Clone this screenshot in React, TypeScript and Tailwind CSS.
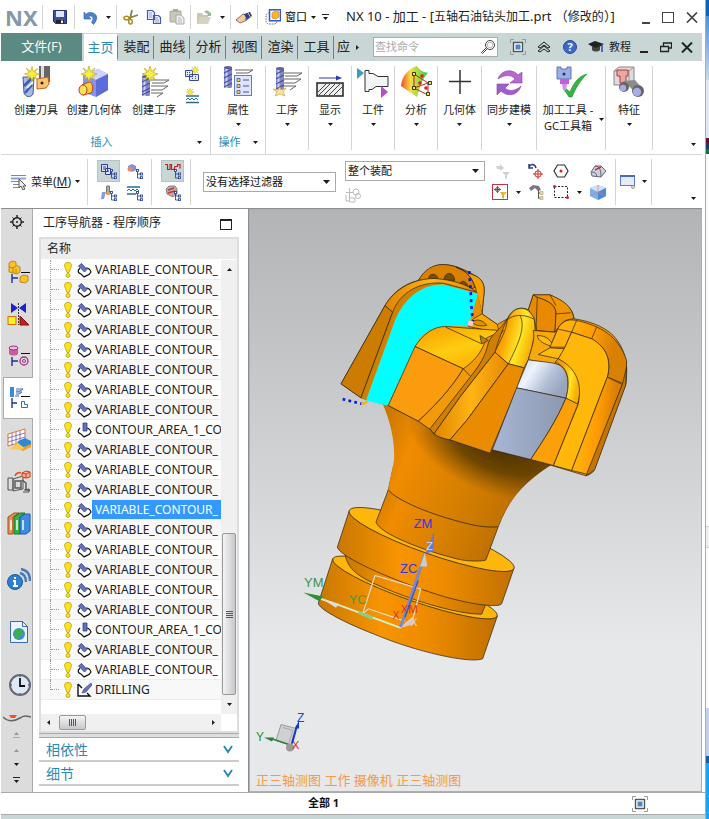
import { useState } from 'react';
import type { ReactNode } from 'react';

const Caret = ({ className = '' }: { className?: string }) => (
  <svg viewBox="0 0 7 4" className={`w-[5px] h-[3px] shrink-0 fill-[#1a1a1a] ${className}`}>
    <path d="M0 0h7L3.5 4z" />
  </svg>
);

const Divider = () => <div className="w-px self-stretch bg-[#d4d4d4]" />;

const Svg = ({ size, children }: { size: string; children: ReactNode }) => {
  const box = size === 'lg' ? '0 0 32 32' : '0 0 16 16';
  const cls = size === 'lg' ? 'w-8 h-8' : 'w-4 h-4';
  return (
    <svg viewBox={box} className={`${cls} shrink-0`} fill="none">
      {children}
    </svg>
  );
};

/* Shared icon parts */
const Star = ({ x, y, s = 1 }: { x: number; y: number; s?: number }) => (
  <path
    transform={`translate(${x} ${y}) scale(${s})`}
    d="M0-8 1.6-2.6 6-6 3-1.5 8 0 3 1.8 5.5 6 1.4 3.2 0 8-1.6 3.2-5.5 6-3 1.6-8 0-3-1.6-6-6-1.6-2.6Z"
    fill="#f7ef3a"
    stroke="#b09a20"
    strokeWidth=".6"
  />
);

const Drill = ({ x, y, h = 22 }: { x: number; y: number; h?: number }) => (
  <g transform={`translate(${x} ${y})`}>
    <rect x="0" y="1" width="8" height={h} rx="1.5" fill="#8088c4" />
    <rect x="1.5" y="1" width="2" height={h} fill="#d0d4f4" />
    <path d={`M0 7l8-4M0 12l8-4M0 17l8-4M0 ${h}l8-4`} stroke="#4650a0" strokeWidth="1.3" />
    <ellipse cx="4" cy="1.5" rx="4" ry="1.5" fill="#5a629c" />
  </g>
);

const Hatch = ({ x, y }: { x: number; y: number }) => (
  <path
    transform={`translate(${x} ${y})`}
    d="M0 1h18l-5 3H1M0 7h17l-6 4H0M0 14h12l-6 4"
    stroke="#666"
    strokeWidth="1"
    fill="none"
  />
);

const TreeMark = ({ x, y }: { x: number; y: number }) => (
  <g transform={`translate(${x} ${y})`} stroke="#1c2f90" fill="#fff" strokeWidth=".8">
    <path d="M1.5 2v6.500h3M1.5 4.500h3" fill="none" />
    <rect x=".5" y="0" width="2" height="2" />
    <rect x="4.500" y="3.500" width="2" height="2" />
    <rect x="4.500" y="7.200" width="2" height="2" />
  </g>
);

/* Ribbon icons */
const ToolIcon = () => (
  <Svg size="lg">
    <rect x="19" y="0" width="11" height="16" fill="#666" />
    <rect x="21" y="0" width="3" height="16" fill="#ddd" />
    <path d="M3 11h11l-1 17c-2 4-8 3-9-1Z" fill="#a8bcdc" stroke="#4a5a90" />
    <path d="M4 20 12 12M5 27l7-8" stroke="#3c5cb8" strokeWidth="2.500" />
    <path d="M7 22l6-6" stroke="#fff" strokeWidth="1.500" />
    <path d="M17 13l11-2 1 7-3 4-9 1Z" fill="#fbc46a" stroke="#c4601c" />
    <circle cx="22" cy="17" r="1.500" fill="#222" />
    <Star x={12} y={8} s={0.95} />
  </Svg>
);

const GeometryIcon = () => (
  <Svg size="lg">
    <path d="M5 9 20 3l10 5v16L18 31 5 26Z" fill="#8494ee" />
    <path d="M5 9 20 3l10 5-12 6Z" fill="#ccd4fa" />
    <path d="M18 14 30 8v16l-12 7Z" fill="#5c6cd8" />
    <path d="M4 19 11 16c4 0 5 8 2 11l-8 2Z" fill="#fbd23a" stroke="#c83420" />
    <ellipse cx="5" cy="24" rx="4" ry="5" fill="#fde45a" stroke="#c83420" />
    <Star x={11} y={8} />
  </Svg>
);

const OperationIcon = () => (
  <Svg size="lg">
    <Hatch x={13} y={13} />
    <Drill x={4} y={9} h={20} />
    <Star x={12} y={8} />
  </Svg>
);

const PropertyIcon = () => (
  <Svg size="lg">
    <Hatch x={13} y={3} />
    <Drill x={2} y={0} h={21} />
    <rect x="12.500" y="9.500" width="17" height="20" fill="#dfe6fb" stroke="#6a78c8" />
    <path d="M21 14h6M21 20h6M21 26h6" stroke="#4450a0" />
    <path d="M15 12.500h3v3h-3zM15 18.500h3v3h-3zM15 24.500h3v3h-3z" fill="#f4dc30" stroke="#4450a0" strokeWidth=".8" />
  </Svg>
);

const ProcessIcon = () => (
  <Svg size="lg">
    <Hatch x={13} y={6} />
    <Drill x={5} y={1} h={22} />
    <path d="M9 21l1 3 5-2-3 4 2 4-5-2-5 2 2-4-4-3 5 1Z" fill="#fbe49a" stroke="#d0a040" strokeWidth=".7" />
  </Svg>
);

const DisplayIcon = () => (
  <Svg size="lg">
    <path d="M5 12h20" stroke="#2a38c0" />
    <path d="M22 9.500 28 12l-6 2.500Z" fill="#2a38c0" />
    <rect x="3" y="17" width="26" height="13" fill="#eee" stroke="#222" strokeWidth="1.500" />
    <path d="M4 26l8-8M5 29l11-11M10 29l11-11M15 29l11-11M20 29l8-8" stroke="#444" />
  </Svg>
);

const WorkpieceIcon = () => (
  <Svg size="lg">
    <path d="M0 2 7 7 0 13Z" fill="#3a9cc4" />
    <path d="M8 4.500h4v3h4l5 3h10v10H19l-4 3h-3v2H8Z" fill="#f4f4f4" stroke="#333" />
    <path d="M24 20l7 6-7 6Z" fill="#b84cd0" />
  </Svg>
);

const AnalysisIcon = () => (
  <Svg size="lg">
    <defs>
      <linearGradient id="rainbow">
        <stop offset="0" stopColor="#f04a30" />
        <stop offset=".35" stopColor="#f8dc40" />
        <stop offset=".7" stopColor="#8cd84a" />
        <stop offset="1" stopColor="#3cc060" />
      </linearGradient>
    </defs>
    <path d="M1 20C2 10 8 3 17 0c3 5 7 6 11 7-6 6-8 14-11 24C12 27 6 24 1 20Z" fill="url(#rainbow)" />
    <path d="M14 8v14l14 7V17L14 22M14 8l14 9" stroke="#c02020" />
    <path d="M12.500 6.500h3v3h-3zM12.500 20.500h3v3h-3zM26.500 26.500h3v3h-3zM28.500 15.500h3v3h-3z" fill="#ffee30" stroke="#333" />
    <circle cx="20" cy="17" r="1.800" fill="#e02020" />
    <circle cx="26" cy="22" r="1.800" fill="#e02020" />
    <circle cx="22" cy="10" r="1.800" fill="#e02020" />
  </Svg>
);

const PlusIcon = () => (
  <Svg size="lg">
    <path d="M16 4v24M5 15.500h22" stroke="#333" strokeWidth="1.500" />
  </Svg>
);

const SyncIcon = () => (
  <Svg size="lg">
    <path d="M5 13C8 4 19 2 25 9l4-3v11H17l5-4c-4-5-11-4-17 0Z" fill="#b468d0" stroke="#8a40a8" strokeWidth=".6" />
    <path d="M28 20c-3 10-14 11-20 5l-4 4V18h12l-4 4c4 4 11 3 16-2Z" fill="#a05cc8" stroke="#8a40a8" strokeWidth=".6" />
  </Svg>
);

const GcToolsIcon = () => (
  <Svg size="lg">
    <path d="M2 1h4v2h6V1h4v12H2Z" fill="#9aaee8" stroke="#6474b4" />
    <circle cx="9" cy="8" r="1.500" fill="#333" />
    <path d="M9 21l6 5C19 16 24 10 32 8 26 14 21 21 17 31h-3L8 22Z" fill="#34b444" stroke="#1c8a30" strokeWidth=".6" />
    <path d="M5 13h9v5H5Z" fill="#c060d8" />
    <path d="M7 18h5l-1 6H8Z" fill="#d88cf0" />
  </Svg>
);

const FeatureIcon = () => (
  <Svg size="lg">
    <path d="M1 5l5-4h15v13l-5 5H1Z" fill="#dcdcdc" stroke="#888" />
    <path d="M1 5h15v14M16 5l5-4" stroke="#999" />
    <path d="M4 4h11v6h-2v7H7v-7H4Z" fill="#e4aaa6" stroke="#c03030" />
    <path d="M10 15l12-1 6 7-7 4Z" fill="#8c8c8c" />
    <circle cx="11" cy="21" r="5" fill="#666" />
    <circle cx="10" cy="22" r="3.200" fill="#a4aee4" />
    <circle cx="25" cy="25" r="6" fill="#666" />
    <circle cx="24" cy="26" r="4.200" fill="#a4aee4" />
  </Svg>
);

const CreateProgramIcon = () => (
  <Svg size="sm">
    <path d="M1.500 4.500h7v6h-7zM5.500 8.500h9v6h-9z" fill="#e4e8fa" stroke="#3a4a90" />
    <path d="M3 6.500h1M5 6.500h1M3 8.500h1M8 10.500h1M11 10.500h1M8 12.500h1M11 12.500h1" stroke="#3a4a90" />
    <Star x={11} y={4} s={0.5} />
  </Svg>
);

const CreateMethodIcon = () => (
  <Svg size="sm">
    <path d="M2 8h13M2 14.500h13" stroke="#2a6c94" strokeWidth="1.600" />
    <path d="M2 12l2-2 2 2 2-2 2 2 2-2 2 2" stroke="#2a6c94" />
    <Star x={6} y={4} s={0.5} />
  </Svg>
);

/* Small toolbar icons */
const ProgramViewIcon = () => (
  <Svg size="sm">
    <path d="M.5 1.500h6v7h-6zM4.500 5.500h5v6h-5z" fill="#dfe4fa" stroke="#2c3c98" />
    <path d="M2 4h3M2 6h2M6 8h2" stroke="#2c3c98" />
    <TreeMark x={9} y={6.5} />
  </Svg>
);

const GeometryViewIcon = () => (
  <Svg size="sm">
    <path d="M1 3l4-2 4 2v4L5 9 1 7Z" fill="#8090dc" />
    <circle cx="3" cy="6" r="2.500" fill="#e88a70" />
    <TreeMark x={9} y={6.5} />
  </Svg>
);

const ToolViewIcon = () => (
  <Svg size="sm">
    <path d="M5.500 1h3v8h-3Z" fill="#aaa" stroke="#777" />
    <path d="M1 7h4L3 14H0Z" fill="#8c9cd8" />
    <path d="M5 7h4v3H6Z" fill="#e8a050" />
    <TreeMark x={9} y={6.5} />
  </Svg>
);

const MethodViewIcon = () => (
  <Svg size="sm">
    <path d="M0 2h13M0 9h9" stroke="#2a6c94" strokeWidth="1.600" />
    <path d="M0 6l2-2 2 2 2-2 2 2 2-2 2 2" stroke="#2a6c94" />
    <TreeMark x={9} y={6.5} />
  </Svg>
);

const PathViewIcon = () => (
  <Svg size="sm">
    <path d="M0 1.500h2.500v5H5v-5h1.500v5H9l1-3h2.500v-2H15v4" stroke="#c02020" strokeWidth="1.200" />
    <TreeMark x={9} y={6.5} />
  </Svg>
);

const StockViewIcon = () => (
  <Svg size="sm">
    <path d="M1 4l3-3h6l2 3v5l-4 3-6-3Z" fill="#b8a8a8" stroke="#888" />
    <path d="M3 5l6-2M3 8l7-2" stroke="#c83a3a" strokeWidth="1.500" />
    <TreeMark x={9} y={6.5} />
  </Svg>
);

const MenuIcon = () => (
  <Svg size="sm">
    <path d="M0 1.500h15M0 7.500h9M2 10.500h6M2 13.500h6" stroke="#888" />
    <path d="M0 4.500h15" stroke="#8aa4dc" strokeWidth="2" />
    <path d="M8 5v9l2-2 2 4 2-1-2-3h3Z" fill="#eee" stroke="#555" />
  </Svg>
);

const FilterOffIcon = () => (
  <Svg size="sm">
    <path d="M1 3h4V1l4 4-4 3V6H2ZM7 9h8l-3 3v4l-2-1v-3Z" fill="#d0d0d0" />
  </Svg>
);

const SnapFilterIcon = () => (
  <Svg size="sm">
    <rect x=".5" y=".5" width="15" height="15" fill="#fff" stroke="#c43444" />
    <circle cx="5.500" cy="5.500" r="2" stroke="#555" />
    <path d="M5.500 2v7M2 5.500h7" stroke="#c03030" />
    <path d="M8 8h7l-3 3v4l-2-1v-3Z" fill="#f0b030" />
  </Svg>
);

const SnapPointIcon = () => (
  <Svg size="sm">
    <path d="M1 1v4h4M1 4c2-4 6-3 7 1" stroke="#2c3c80" strokeWidth="1.500" />
    <circle cx="10" cy="11" r="3.200" stroke="#c83030" />
    <path d="M10 6v10M5 11h10" stroke="#c83030" />
  </Svg>
);

const BinocularsIcon = () => (
  <Svg size="sm">
    <path d="M1 4l4-3 6 1 2 4-3 1-3-3-4 3Z" fill="#778" />
    <path d="M10.500 6v8.500M10 9h3M10 14h3" stroke="#555" />
    <path d="M12 7.500h3v3h-3zM12 12.500h3v3h-3z" fill="#f4e08a" stroke="#999" strokeWidth=".6" />
  </Svg>
);

const HexIcon = () => (
  <Svg size="sm">
    <path d="M4.500 2h7L15 8l-3.500 6h-7L1 8Z" stroke="#333" strokeWidth="1.200" />
    <circle cx="8" cy="8" r="1.500" fill="#d02020" />
  </Svg>
);

const MarqueeIcon = () => (
  <Svg size="sm">
    <path d="M1.500 2.500h13v11h-13z" stroke="#222" strokeDasharray="2 1.500" />
    <circle cx="1.500" cy="2.500" r="1.500" fill="#d02020" />
    <circle cx="14.500" cy="13.500" r="1.500" fill="#d02020" />
  </Svg>
);

const FaceIcon = () => (
  <Svg size="sm">
    <path d="M1 9 5 3h6l5 5-5 6-9-1Z" fill="#ccd0dc" stroke="#667" />
    <path d="M5 3c5 0 6 5 6 11M2 9c3 0 5 2 5 5" stroke="#667" />
    <path d="M5 7l6-3" stroke="#d03030" strokeWidth="1.500" />
  </Svg>
);

const CubeIcon = () => (
  <Svg size="sm">
    <path d="M0 4 8 1l8 3v8l-8 4-8-4Z" fill="#7ab0ee" />
    <path d="M0 4 8 1l8 3-8 4Z" fill="#d0e0fa" />
    <path d="M8 8l8-4v8l-8 4Z" fill="#4c88d8" />
    <path d="M8 1v7L0 12M8 8l8 4" stroke="#d87878" strokeWidth=".7" />
  </Svg>
);

const ScreenIcon = () => (
  <Svg size="sm">
    <rect x=".5" y="1.500" width="14" height="10" fill="#e4ecfc" stroke="#6078c8" />
    <path d="M0 2h15" stroke="#4a68c4" strokeWidth="2" />
    <circle cx="13" cy="13" r="1.500" fill="#ddd" stroke="#88a" strokeWidth=".7" />
  </Svg>
);

const GhostIcon = () => (
  <Svg size="sm">
    <path d="M4.500 1v14M1 5.500h7M1 8v6h3M5 11h5v4H5" stroke="#bbb" />
    <circle cx="11" cy="5" r="3" stroke="#bbb" />
    <circle cx="13" cy="9" r="2.500" stroke="#bbb" />
  </Svg>
);

const FrameIcon = () => (
  <Svg size="sm">
    <path d="M.5 4V.5H4M12 .5h3.500V4M15.500 12v3.500H12M4 15.500H.5V12" stroke="#999" />
    <rect x="3.500" y="3.500" width="9" height="9" fill="#fff" stroke="#555" strokeWidth="1.400" />
    <rect x="5.500" y="5.500" width="5" height="5" fill="#4a88c8" />
  </Svg>
);

/* Quick access icons */
const SaveIcon = () => (
  <Svg size="sm">
    <path d="M1.500 1.500h13v13h-11l-2-2Z" fill="#3a50a4" stroke="#24306c" />
    <path d="M4 2h8v6H4Z" fill="#dce8fa" />
    <path d="M4 11h8v3H4Z" fill="#222" />
    <path d="M9 11.500h2V14H9Z" fill="#fff" />
  </Svg>
);

const UndoIcon = () => (
  <Svg size="sm">
    <path d="M2 3v7h7L6.500 7.500c4-2 6 2 3 6l2 2c6-7 3-12-4-12-2 0-3 1-3.500 2Z" fill="#4a84cc" stroke="#285ca0" strokeWidth=".6" />
  </Svg>
);

const CutIcon = () => (
  <Svg size="sm">
    <path d="M9 1 7 10M15 6 6 9" stroke="#8c8050" strokeWidth="1.800" />
    <ellipse cx="3.500" cy="9" rx="2.500" ry="1.800" stroke="#b08c20" strokeWidth="1.500" />
    <ellipse cx="7.500" cy="12.800" rx="1.800" ry="2.200" stroke="#b08c20" strokeWidth="1.500" />
  </Svg>
);

const CopyIcon = () => (
  <Svg size="sm">
    <path d="M1.500 1.500h5l2 2v7h-7zM7.500 6.500h5l2 2v6h-7z" fill="#eef2fd" stroke="#4658b4" strokeWidth="1.200" />
    <path d="M3 4h3M3 6h3M3 8h3M9 9h3M9 11h4M9 13h4" stroke="#7888cc" strokeWidth=".8" />
  </Svg>
);

const PasteIcon = () => (
  <Svg size="sm">
    <path d="M1 2h11v11H1Z" fill="#c8c8b8" stroke="#aaa89c" />
    <path d="M4 0h5v3H4Z" fill="#aaa" />
    <path d="M7 6h5l3 3v6H7Z" fill="#eee" stroke="#aaa" />
    <path d="M9 9h3M9 11h4M9 13h4" stroke="#bbb" />
  </Svg>
);

const FolderIcon = () => (
  <Svg size="sm">
    <path d="M1 4h5l1 2h5v9H1Z" fill="#c8c8b0" />
    <path d="M1 15 4 8h11l-3 7Z" fill="#d4d4c0" />
    <path d="M8 3c3-3 5-1 6 1l1-1v4h-4l1-1c-1-2-2-2-4-3Z" fill="#9cb89c" />
  </Svg>
);

const BrushIcon = () => (
  <Svg size="sm">
    <path d="M0 11 7 5l5 2-3 3 2 1-7 3Z" fill="#f8cc98" stroke="#705040" strokeWidth=".8" />
    <path d="M8 5l6-2 2 4-5 4Z" fill="#2c3c98" />
    <path d="M12 4l3 5" stroke="#f0d040" />
  </Svg>
);

const WindowIcon = () => (
  <Svg size="sm">
    <rect x="1" y="4" width="11" height="11" rx="3" stroke="#666" strokeDasharray="1.500 1" />
    <rect x="4.500" y=".8" width="11" height="11" fill="#fff" stroke="#2858e0" strokeWidth="1.500" />
    <path d="M7 4l3-2 4 1v5l-3 2-4-1Z" fill="#f8b830" stroke="#e08010" strokeWidth=".7" />
  </Svg>
);

/* Resource bar icons */
const RailSvg = ({ children }: { children: ReactNode }) => (
  <svg viewBox="0 0 24 24" className="w-6 h-6" fill="none">
    {children}
  </svg>
);

const railIcons: { name: string; gap?: string; icon: ReactNode }[] = [
  {
    name: '装配导航器',
    icon: (
      <RailSvg>
        <path d="M2 3l3-2 4 1v3l4 2v5l-3 2-8-2Z" fill="#fbc02a" stroke="#b07808" strokeWidth=".8" />
        <path d="M2 7l4 1 3-2M6 8v5M9 9v5" stroke="#b07808" strokeWidth=".8" />
        <path d="M5 14v9M5 18h6" stroke="#1c2fa0" strokeWidth="1.400" />
        <path d="M14 12.500h9" stroke="#111" />
        <path d="M13 17l3-2 5 1v5l-3 2-5-1Z" fill="#fbc02a" stroke="#b07808" strokeWidth=".8" />
      </RailSvg>
    ),
  },
  {
    name: '约束导航器',
    icon: (
      <RailSvg>
        <path d="M4 1l7 5-7 5ZM19 1l-7 5 7 5Z" fill="#1c22d0" />
        <path d="M11.500 1v22" stroke="#333" strokeDasharray="2 1" />
        <rect x="1" y="14.500" width="8" height="8" fill="#f8f020" stroke="#d07010" />
        <path d="M13 14l9 9h-9Z" fill="#c82020" stroke="#801010" />
      </RailSvg>
    ),
  },
  {
    name: '部件导航器',
    icon: (
      <RailSvg>
        <path d="M2 4v6c2 2 7 2 9 0V4Z" fill="#cc5aa0" />
        <ellipse cx="6.500" cy="4" rx="4.500" ry="2" fill="#f0b8dc" stroke="#98307a" />
        <path d="M14 9.500h9" stroke="#111" />
        <path d="M5 13v9M5 17h6" stroke="#1c2fa0" strokeWidth="1.400" />
        <circle cx="17" cy="17" r="4" stroke="#a83088" strokeWidth="1.300" />
        <circle cx="17" cy="17" r="1.500" stroke="#a83088" />
      </RailSvg>
    ),
  },
  {
    name: '工序导航器',
    icon: (
      <RailSvg>
        <path d="M3 1h4v10H3Z" fill="#3c8ad8" />
        <path d="M9 3h7l-3 2H9M9 6h6l-3 2H9M8 10h4" stroke="#3c6cb8" />
        <path d="M14 10.500h9" stroke="#111" />
        <path d="M5 12v10M5 17h5" stroke="#1c2fa0" strokeWidth="1.400" />
        <path d="M14.500 15.500v6h6v-3h-3v-3Z" stroke="#2c70c8" />
      </RailSvg>
    ),
  },
  {
    name: '机床导航器',
    icon: (
      <RailSvg>
        <path d="M1 6 18 1v12L1 18Z" fill="#fff" stroke="#d87830" />
        <path d="M5 5v12M9 4v11M13 3v11M1 10l17-5M1 14l17-5" stroke="#7858b0" strokeWidth=".8" />
        <path d="M8 15l9-4 7 3v5l-8 4-8-4Z" fill="#f8a020" />
        <path d="M11 13l7-3 6 3v3l-7 3-6-3Z" fill="#2c88d8" />
        <path d="M2 21l9-6 6 5-4 2Z" fill="#fbc860" />
      </RailSvg>
    ),
  },
  {
    name: '加工特征导航器',
    icon: (
      <RailSvg>
        <path d="M1 8h5v12H1ZM6 9l10-3v13l-10 2Z" fill="#dcdcdc" stroke="#555" />
        <path d="M8 11h6v7H8ZM15 10l4 3v7h4" stroke="#555" strokeWidth="1.400" />
        <path d="M8 6c1-3 4-4 6-3" stroke="#e05020" strokeWidth="1.500" />
        <path d="M15 3l4-2 4 1v5l-4 1-4-1ZM15 3l4 1 4-2M19 4v4" fill="#f8b090" stroke="#d83a10" />
        <path d="M17 20l5-1v3h-6" stroke="#555" />
      </RailSvg>
    ),
  },
  {
    name: '重用库',
    icon: (
      <RailSvg>
        <path d="M1 5 7 1h5L6 5v17H1Z" fill="#e89050" stroke="#a04c20" />
        <path d="M7 5l6-4h5l-5 4v17H7Z" fill="#38b048" stroke="#187428" />
        <path d="M13 5l5-3h5v17l-4 3h-6Z" fill="#3c8ce0" stroke="#1c5ca8" />
        <path d="M4 8v10M10 8v10M16 8v10" stroke="#fff" strokeWidth="1.400" />
      </RailSvg>
    ),
  },
  {
    name: 'HD3D 工具',
    gap: 'mt-[13px]',
    icon: (
      <RailSvg>
        <circle cx="8" cy="15" r="7.500" fill="#2c80d4" stroke="#1858a0" />
        <path d="M6 14h2v5M6 19h5M8 10v2" stroke="#fff" strokeWidth="2" />
        <path d="M13 6c4 1 6 4 6 9M14 2c6 1 9 5 9 12" stroke="#4878b8" strokeWidth="2.500" />
      </RailSvg>
    ),
  },
  {
    name: 'Web 浏览器',
    gap: 'mt-[11px]',
    icon: (
      <RailSvg>
        <path d="M3.500 1.500h12l5 5v16h-17Z" fill="#eef4fe" stroke="#3c68b8" />
        <path d="M15.500 1.500v5h5" stroke="#3c68b8" />
        <circle cx="12" cy="14" r="6" fill="#3c8cd8" />
        <path d="M8 10c3-2 4 0 7 0l1 4-3 2-2 4-4-4Z" fill="#3cb048" />
      </RailSvg>
    ),
  },
  {
    name: '历史记录',
    gap: 'mt-[11px]',
    icon: (
      <RailSvg>
        <circle cx="13" cy="12" r="10" fill="#dce8f6" stroke="#667" strokeWidth="2" />
        <path d="M13 5v8h5" stroke="#111" strokeWidth="1.800" />
        <path d="M13 3v1M13 20v1M4 12h1M21 12h1" stroke="#333" />
      </RailSvg>
    ),
  },
];

const tabs = ['主页', '装配', '曲线', '分析', '视图', '渲染', '工具'];

const toolGroups: { label: string; second?: string; width: string; icon: ReactNode }[] = [
  { label: '工序', width: 'w-[42px]', icon: <ProcessIcon /> },
  { label: '显示', width: 'w-[42px]', icon: <DisplayIcon /> },
  { label: '工件', width: 'w-[42px]', icon: <WorkpieceIcon /> },
  { label: '分析', width: 'w-[42px]', icon: <AnalysisIcon /> },
  { label: '几何体', width: 'w-[43px]', icon: <PlusIcon /> },
  { label: '同步建模', width: 'w-[54px]', icon: <SyncIcon /> },
  { label: '加工工具 -', second: 'GC工具箱', width: 'w-[68px]', icon: <GcToolsIcon /> },
  { label: '特征', width: 'w-[46px]', icon: <FeatureIcon /> },
];

const operations = [
  ...Array(8).fill('VARIABLE_CONTOUR_'),
  'CONTOUR_AREA_1_CO',
  ...Array(9).fill('VARIABLE_CONTOUR_'),
  'CONTOUR_AREA_1_CO',
  'VARIABLE_CONTOUR_',
  'VARIABLE_CONTOUR_',
  'DRILLING',
] as string[];

const BigButton = ({ label, width, icon }: { label: string; width: string; icon: ReactNode }) => (
  <button className={`${width} flex flex-col items-center`}>
    {icon}
    <span className="mt-[2px] text-[11px] leading-5 whitespace-nowrap">{label}</span>
  </button>
);

const TitleBar = () => (
  <header className="flex h-[33px] items-center pt-px pl-1">
    <span className="w-[37px] text-[22px] leading-6 font-bold text-[#8598a8]" style={{ fontFamily: 'Noto Sans' }}>
      NX
    </span>
    <div className="flex h-6 items-center">
      <Divider />
      <button className="ml-[9px]" aria-label="保存"><SaveIcon /></button>
      <div className="mr-[7px] ml-[6px] flex self-stretch"><Divider /></div>
      <button className="flex items-center gap-2" aria-label="撤消"><UndoIcon /><Caret /></button>
      <div className="mr-[6px] ml-[5px] flex self-stretch"><Divider /></div>
      <button aria-label="剪切"><CutIcon /></button>
      <button className="ml-[7px]" aria-label="复制"><CopyIcon /></button>
      <button className="ml-[7px]" aria-label="粘贴"><PasteIcon /></button>
      <div className="mx-[5px] flex self-stretch"><Divider /></div>
      <button className="flex items-center gap-2" aria-label="打开"><FolderIcon /><Caret /></button>
      <div className="mx-[5px] flex self-stretch"><Divider /></div>
      <button aria-label="格式刷"><BrushIcon /></button>
      <div className="mr-[7px] ml-[5px] flex self-stretch"><Divider /></div>
      <button className="flex items-center gap-1 text-[11px]">
        <WindowIcon />
        窗口
        <Caret />
      </button>
      <button className="ml-[6px] flex flex-col items-center gap-[2px]" aria-label="更多">
        <span className="h-px w-[7px] bg-[#222]" />
        <Caret />
      </button>
    </div>
    <h1 className="ml-[17px] flex-1 text-[13px] whitespace-nowrap text-[#222]">
      NX 10 - 加工 - [<span className="text-xs">五轴石油钻头加工</span>.prt （<span className="text-xs">修改的</span>）]
    </h1>
    <div className="mr-[7px] flex items-center gap-3">
      <button className="mt-3 h-[2px] w-2 bg-[#444]" aria-label="最小化" />
      <button className="h-[11px] w-3 border border-[#444]" aria-label="最大化" />
      <button aria-label="关闭">
        <svg viewBox="0 0 12 11" className="h-[11px] w-3"><path d="M1 .5l10 10M11 .5l-10 10" stroke="#444" strokeWidth="1.700" /></svg>
      </button>
    </div>
  </header>
);

const TabBar = ({ tab, onTab }: { tab: string; onTab: (t: string) => void }) => (
  <nav className="mr-[3px] flex h-7 items-stretch bg-[#c8d7d5] text-[13px] text-[#222]">
    <button className="w-[81px] bg-[#5a8a82] text-white">文件(F)</button>
    {tabs.map((t) => (
      <div key={t} className="flex items-center pl-[2px]">
        <button
          onClick={() => onTab(t)}
          className={`h-7 w-[33px] ${t === tab ? 'mt-[2px] bg-white text-[#2b8ab5]' : ''}`}
        >
          {t}
        </button>
        <div className="h-[23px] w-px bg-[#5a8a82]" />
      </div>
    ))}
    <button className="ml-[3px] flex w-[27px] items-center gap-[5px]">
      应<Caret className="-rotate-90" />
    </button>
    <div className="ml-[9px] flex h-5 w-[125px] items-center self-center border border-[#aaa] bg-white">
      <input aria-label="查找命令" placeholder="查找命令" className="w-full min-w-0 pl-px text-[11px] outline-none placeholder:text-[#aaa]" />
      <svg viewBox="0 0 16 16" className="mr-px h-4 w-4 shrink-0" fill="none">
        <circle cx="10" cy="6" r="4.500" stroke="#444" />
        <circle cx="10" cy="6" r="2.800" stroke="#999" strokeWidth=".7" />
        <path d="M6 9l-4.500 4.500 1 1L7 10" stroke="#444" />
      </svg>
    </div>
    <div className="ml-[12px] flex flex-1 items-center">
      <button aria-label="全屏"><FrameIcon /></button>
      <button className="ml-[11px]" aria-label="收起功能区">
        <svg viewBox="0 0 14 12" className="h-3 w-[14px]" fill="none">
          <path d="M1 6l6-5 6 5-2 1-4-3-4 3ZM1 10l6-5 6 5-2 1-4-3-4 3Z" stroke="#222" />
        </svg>
      </button>
      <button className="ml-3" aria-label="帮助">
        <svg viewBox="0 0 14 14" className="h-[14px] w-[14px]">
          <circle cx="7" cy="7" r="6.500" fill="#3c68c8" stroke="#2848a0" />
          <text x="7" y="11" textAnchor="middle" fontSize="11" fontWeight="700" fill="#fff">?</text>
        </svg>
      </button>
      <button className="ml-[11px] flex items-center gap-1 text-[11px]">
        <svg viewBox="0 0 17 14" className="h-[14px] w-[17px]">
          <path d="M0 4 7 1l9 3-8 5Z" fill="#222" />
          <path d="M4 6v4c2 2 6 2 8 0V6L8 8Z" fill="#444" />
          <path d="M14 4v8" stroke="#2c48b0" strokeWidth="1.500" />
        </svg>
        教程
      </button>
      <button className="mt-[10px] ml-[9px] h-[2px] w-2 bg-[#222]" aria-label="最小化窗口" />
      <button className="ml-3" aria-label="还原窗口">
        <svg viewBox="0 0 12 11" className="h-[11px] w-3" fill="none">
          <path d="M3.500 4V1h8v5H8M.5 4.500h8v5h-8z" stroke="#222" strokeWidth="1.300" />
        </svg>
      </button>
      <button className="ml-[9px]" aria-label="关闭窗口">
        <svg viewBox="0 0 12 11" className="h-[11px] w-3"><path d="M1 .5l10 10M11 .5l-10 10" stroke="#222" strokeWidth="2" /></svg>
      </button>
    </div>
  </nav>
);

const Ribbon = () => (
  <section className="mr-[3px] flex h-[94px] items-start border-b border-[#d8d8d8] pt-[5px] text-[#222]">
    <div className="flex h-[84px] w-[209px] flex-col justify-between">
      <div className="flex pl-[7px]">
        <BigButton label="创建刀具" width="w-14" icon={<ToolIcon />} />
        <BigButton label="创建几何体" width="w-[60px]" icon={<GeometryIcon />} />
        <BigButton label="创建工序" width="w-[60px]" icon={<OperationIcon />} />
        <div className="flex flex-col gap-[6px]">
          <button aria-label="创建程序"><CreateProgramIcon /></button>
          <button aria-label="创建方法"><CreateMethodIcon /></button>
        </div>
      </div>
      <div className="grid h-4 grid-cols-[1fr_auto_1fr] items-center pr-2 text-[11px] leading-4 text-[#2b8ab5]">
        <span />
        插入
        <Caret className="justify-self-end" />
      </div>
    </div>
    <Divider />
    <div className="flex h-[84px] w-[54px] flex-col items-center justify-between">
      <div className="flex flex-col items-center">
        <BigButton label="属性" width="w-[54px]" icon={<PropertyIcon />} />
        <Caret className="mt-[3px]" />
      </div>
      <div className="flex h-4 items-center gap-3 text-[11px] leading-4 text-[#2b8ab5]">
        操作
        <Caret />
      </div>
    </div>
    <Divider />
    {toolGroups.map((g) => (
      <div key={g.label} className="flex h-[84px]">
        <div className={`${g.width} flex flex-col items-center`}>
          {g.second ? (
            <button className="flex flex-col items-center text-[11px] whitespace-nowrap">
              {g.icon}
              <span className="mt-1 pr-[6px] leading-4">{g.label}</span>
              <span className="flex items-start gap-[7px] pl-[6px] leading-4">
                {g.second}
                <Caret />
              </span>
            </button>
          ) : (
            <>
              <BigButton label={g.label} width="w-full" icon={g.icon} />
              <Caret className="mt-[3px]" />
            </>
          )}
        </div>
        <Divider />
      </div>
    ))}
    <div className="flex h-[84px] flex-1 items-end justify-end pr-[6px] pb-1"><Caret /></div>
  </section>
);

const Select = ({ label, width, items }: { label: string; width: string; items: string[] }) => (
  <div className={`relative flex ${width}`}>
    <select aria-label={label} className="h-5 w-full appearance-none border border-[#aaa] bg-white pl-[2px] text-[11px] leading-4 text-[#111]">
      {items.map((i) => (
        <option key={i}>{i}</option>
      ))}
    </select>
    <Caret className="pointer-events-none absolute top-2 right-[6px] w-[7px]! h-1!" />
  </div>
);

const Toolbar = () => (
  <section className="mr-[3px] flex h-[54px] items-center border-b border-[#8c8f92] text-[#222]">
    <button className="ml-[10px] flex w-[76px] items-center gap-1 text-xs">
      <MenuIcon />
      <span><span className="text-[11px]">菜单</span>(<u>M</u>)</span>
      <Caret />
    </button>
    <div className="flex h-[46px]"><Divider /></div>
    <div className="ml-[9px] grid grid-cols-[23px_22px] items-center justify-items-center gap-x-1">
      <button className="flex h-[22px] w-[23px] items-center justify-center border border-[#b4c4c2] bg-[#c8d7d5]" aria-label="程序顺序视图"><ProgramViewIcon /></button>
      <button aria-label="几何视图"><GeometryViewIcon /></button>
      <button className="flex h-[22px] items-center" aria-label="机床视图"><ToolViewIcon /></button>
      <button aria-label="加工方法视图"><MethodViewIcon /></button>
    </div>
    <div className="ml-[5px] flex h-[46px]"><Divider /></div>
    <div className="mx-[9px] mr-[6px] flex flex-col items-center">
      <button className="flex h-[22px] w-[23px] items-center justify-center border border-[#b4c4c2] bg-[#c8d7d5]" aria-label="显示刀轨"><PathViewIcon /></button>
      <button className="flex h-[22px] items-center" aria-label="显示毛坯"><StockViewIcon /></button>
    </div>
    <div className="flex h-[46px]"><Divider /></div>
    <div className="ml-3"><Select label="选择过滤器" width="w-[133px]" items={['没有选择过滤器']} /></div>
    <div className="ml-[9px] flex flex-col gap-[6px]">
      <Select label="选择范围" width="w-[140px]" items={['整个装配']} />
      <button className="w-4" aria-label="捕捉"><GhostIcon /></button>
    </div>
    <div className="ml-[7px] grid grid-cols-[28px_16px] gap-y-[5px]">
      <span className="pl-[3px]"><FilterOffIcon /></span>
      <span />
      <button className="flex items-center gap-2" aria-label="点过滤器"><SnapFilterIcon /><Caret /></button>
    </div>
    <div className="-ml-2 flex flex-col gap-[5px]">
      <button aria-label="捕捉点"><SnapPointIcon /></button>
      <button aria-label="查找"><BinocularsIcon /></button>
    </div>
    <div className="ml-[9px] flex flex-col gap-[5px]">
      <button aria-label="多边形"><HexIcon /></button>
      <button className="flex items-center gap-2" aria-label="矩形选择"><MarqueeIcon /><Caret /></button>
    </div>
    <div className="ml-2 flex flex-col gap-[5px]">
      <button aria-label="面"><FaceIcon /></button>
      <button aria-label="着色"><CubeIcon /></button>
    </div>
    <div className="ml-[9px] flex h-[46px]"><Divider /></div>
    <button className="mx-[4px] flex items-center gap-[6px]" aria-label="窗口布局"><ScreenIcon /><Caret /></button>
    <div className="flex h-[46px]"><Divider /></div>
    <div className="flex h-[46px] flex-1 items-end justify-end pr-[6px] pb-[5px]"><Caret /></div>
  </section>
);

const Rail = () => (
  <aside className="flex w-8 shrink-0 flex-col items-center border-r border-[#aaa] bg-[#dcdcdc]">
    <button className="flex h-[42px] items-start pt-[6px]" aria-label="设置">
      <svg viewBox="0 0 14 14" className="h-[14px] w-[14px]" fill="none">
        <circle cx="7" cy="7" r="4.300" stroke="#222" strokeWidth="1.400" />
        <path d="M7 0v3M7 11v3M0 7h3M11 7h3" stroke="#222" strokeWidth="1.500" />
        <path d="M2.500 2.500l2 2M9.500 9.500l2 2M11.500 2.500l-2 2M2.500 11.500l2-2" stroke="#222" />
        <circle cx="7" cy="7" r="1" fill="#222" />
      </svg>
    </button>
    {railIcons.map((r) => (
      <button
        key={r.name}
        aria-label={r.name}
        className={`${r.gap ?? ''} flex h-[42px] shrink-0 items-center justify-center ${
          r.name === '工序导航器' ? '-mr-px w-[30px] self-end border-y border-l border-[#aaa] bg-white' : 'w-full pl-1'
        }`}
      >
        {r.icon}
      </button>
    ))}
    <svg viewBox="0 0 28 8" className="mt-2 h-2 w-7 shrink-0" fill="none">
      <path d="M0 3c6 6 12 4 17 1s6-2 11-1" stroke="#666" strokeWidth="1.500" />
      <path d="M6 1h8l-2 3H8Z" fill="#f05020" />
    </svg>
    <div className="flex flex-1 flex-col items-center justify-around pt-1 pb-1">
      <span className="flex flex-col items-center gap-[2px]"><Caret className="rotate-180 fill-[#999]!" /><span className="h-px w-[7px] bg-[#aaa]" /></span>
      <Caret className="rotate-180 fill-[#999]!" />
      <Caret />
      <span className="flex flex-col items-center gap-[2px]"><span className="h-px w-[7px] bg-[#222]" /><Caret /></span>
    </div>
  </aside>
);

const MillMark = ({ name }: { name: string }) => (
  <svg viewBox="0 0 15 16" className="h-4 w-[15px] shrink-0" fill="none">
    {name === 'DRILLING' ? (
      <>
        <path d="M1 2v12h12l-3-3M1 2l4 4" stroke="#111" strokeWidth="1.400" />
        <path d="M14 1 7 7l-2 4 4-1 6-7Z" fill="#6874bc" stroke="#2c387c" strokeWidth=".6" />
      </>
    ) : (
      <>
        <path d="M3 6c-3 3-2 5 1 6l3 3c2-2 5-1 7-5-1-3-3-4-5-4" fill="#fff" stroke="#111" strokeWidth="1.200" />
        <path
          d={name.startsWith('CONTOUR') ? 'M6 1h4v8H6Z' : 'M1.500 4l3-2.500 5.500 6-2.500 2.500Z'}
          fill="#6470c4"
          stroke="#323c84"
          strokeWidth=".8"
        />
      </>
    )}
  </svg>
);

const Navigator = () => {
  const [selected, setSelected] = useState(12);

  return (
    <section className="flex w-[215px] shrink-0 flex-col bg-white pr-[9px] pl-[6px] text-[#222]">
      <div className="flex h-7 items-center justify-between pr-[7px] pl-1">
        <h2 className="text-xs">工序导航器 - 程序顺序</h2>
        <button className="mt-[3px] h-[11px] w-3 border border-t-2 border-[#222]" aria-label="最大化面板" />
      </div>
      <div className="flex flex-1 flex-col border-2 border-[#ddd]">
        <div className="mb-px h-5 bg-[#ededed] pl-[6px] text-xs leading-5">名称</div>
        <div className="flex flex-1">
          <ul className="min-w-0 flex-1 overflow-hidden text-xs">
            {operations.map((name, i) => (
              <li
                key={i}
                onClick={() => setSelected(i)}
                className="flex h-5 items-center border-b border-[#ececec] pl-[9px] even:bg-[#f8f8f8]"
              >
                <span className={`w-px shrink-0 border-l border-dotted border-[#999] ${i === operations.length - 1 ? 'h-[10px] self-start' : 'h-5'}`} />
                <span className="w-2 shrink-0 border-t border-dotted border-[#999]" />
                <svg viewBox="0 0 8 16" className="ml-[5px] h-4 w-2 shrink-0">
                  <path d="M4 .5c4 0 4 3 2.500 6L5 10.500H3L1.500 6.500C0 3.500 0 .5 4 .5Z" fill="#fbe41c" stroke="#b89810" strokeWidth=".8" />
                  <circle cx="4" cy="13.500" r="2" fill="#fbe41c" stroke="#b89810" strokeWidth=".8" />
                </svg>
                <span className="ml-[5px] flex shrink-0"><MillMark name={name} /></span>
                <span className={`flex-1 pl-[3px] leading-[19px] whitespace-nowrap ${i === selected ? 'bg-[#3399ff] text-white' : ''}`}>
                  {name}
                </span>
              </li>
            ))}
          </ul>
          <div className="flex w-4 flex-col items-center bg-[#f0f0f0] py-2">
            <Caret className="rotate-180" />
            <div className="mt-[262px] flex w-[14px] flex-1 items-center justify-center rounded-[2px] border border-[#999] bg-linear-to-r from-[#f4f4f4] to-[#c8c8cc]">
              <div className="flex flex-col gap-px">
                <span className="h-px w-[7px] bg-[#555]" />
                <span className="h-px w-[7px] bg-[#555]" />
                <span className="h-px w-[7px] bg-[#555]" />
                <span className="h-px w-[7px] bg-[#555]" />
              </div>
            </div>
            <Caret className="mt-2" />
          </div>
        </div>
        <div className="mr-4 flex h-[17px] items-center bg-[#f0f0f0] pr-[5px] pl-[5px]">
          <Caret className="rotate-90" />
          <div className="ml-2 flex h-[15px] w-[27px] items-center justify-center gap-px rounded-[2px] border border-[#999] bg-linear-to-b from-[#f4f4f4] to-[#c8c8cc]">
            <span className="h-[7px] w-px bg-[#555]" />
            <span className="h-[7px] w-px bg-[#555]" />
            <span className="h-[7px] w-px bg-[#555]" />
            <span className="h-[7px] w-px bg-[#555]" />
          </div>
          <Caret className="ml-auto -rotate-90" />
        </div>
      </div>
      <div className="h-[5px] border-y border-[#aaa] bg-[#ddd]" />
      {['相依性', '细节'].map((t) => (
        <button key={t} className="flex h-6 items-center justify-between border-b-2 border-[#ccc] pt-px pr-[6px] pl-[7px] text-sm leading-5 text-[#2b8ab5]">
          {t}
          <svg viewBox="0 0 10 9" className="h-[9px] w-[10px]" fill="none"><path d="M1 1l4 6 4-6" stroke="#2b8ab5" strokeWidth="2" /></svg>
        </button>
      ))}
      <div className="h-[6px]" />
    </section>
  );
};

/* The drill bit model. Groups are drawn at three times scale around their own origin. */
const Model = () => (
  <svg viewBox="250 210 451 580" className="h-full w-full" preserveAspectRatio="xMidYMid meet" role="img" aria-label="石油钻头模型">
    <defs>
      <linearGradient id="body">
        <stop offset="0" stopColor="#c87800" />
        <stop offset=".35" stopColor="#f89400" />
        <stop offset=".6" stopColor="#ee8c00" />
        <stop offset="1" stopColor="#c07000" />
      </linearGradient>
      <linearGradient id="shank" x1="0" y1="0" x2="1" y2=".3">
        <stop offset="0" stopColor="#c07200" />
        <stop offset=".25" stopColor="#f08c00" />
        <stop offset=".7" stopColor="#d07c00" />
        <stop offset="1" stopColor="#b86c00" />
      </linearGradient>
      <radialGradient id="shadow" gradientUnits="userSpaceOnUse" cx="500" cy="446" r="88" gradientTransform="translate(500 446) rotate(20) scale(1.100 .55) translate(-500 -446)">
        <stop offset="0" stopColor="#4a3000" />
        <stop offset=".5" stopColor="#5c3c00" stopOpacity=".85" />
        <stop offset="1" stopColor="#704800" stopOpacity="0" />
      </radialGradient>
      <linearGradient id="rim">
        <stop offset="0" stopColor="#e08400" />
        <stop offset=".5" stopColor="#ffb414" />
        <stop offset="1" stopColor="#e88800" />
      </linearGradient>
      <linearGradient id="rimRight" x1="0" y1=".4" x2="1" y2=".6">
        <stop offset=".2" stopColor="#ffb00a" />
        <stop offset=".5" stopColor="#ff9c00" />
        <stop offset=".8" stopColor="#d88000" />
      </linearGradient>
      <linearGradient id="yellow" x1="0" y1="0" x2=".6" y2="1">
        <stop offset="0" stopColor="#f89c00" />
        <stop offset=".6" stopColor="#ffcc10" />
        <stop offset="1" stopColor="#ffb000" />
      </linearGradient>
      <linearGradient id="knob" x1="0" y1="0" x2="1" y2=".4">
        <stop offset="0" stopColor="#f09000" />
        <stop offset=".35" stopColor="#fba200" />
        <stop offset=".7" stopColor="#ffe628" />
        <stop offset="1" stopColor="#f8b000" />
      </linearGradient>
      <linearGradient id="silver" x1="0" y1="0" x2="1" y2=".5">
        <stop offset="0" stopColor="#c4ccdc" />
        <stop offset=".35" stopColor="#eef4ff" />
        <stop offset=".7" stopColor="#b4c0d8" />
        <stop offset="1" stopColor="#98a4bc" />
      </linearGradient>
      <linearGradient id="steel">
        <stop offset="0" stopColor="#a8b6d4" />
        <stop offset="1" stopColor="#8c98b0" />
      </linearGradient>
    </defs>

    {/* flange, collar and shank */}
    <g transform="translate(290 470) scale(.3333)" stroke="#33281a" strokeWidth="2.200">
      <path d="M128 265L622 437 578 565C540 580 380 545 250 490 160 455 85 415 85 398Z" fill="url(#body)" />
      <ellipse cx="375" cy="351" rx="261" ry="41" transform="rotate(19.200 375 351)" fill="#ffb60a" />
      <path d="M165 250C170 290 200 315 250 338 350 385 500 432 575 431L592 390 190 240Z" fill="url(#body)" />
      <path d="M178 120L672 293 635 400C630 412 540 405 420 365 300 325 150 260 142 230Z" fill="url(#body)" />
      <ellipse cx="425" cy="207" rx="262" ry="44" transform="rotate(19.300 425 207)" fill="#ffb60a" />
      <path d="M310 -10L295 58 258 155C270 190 400 240 500 265 540 275 585 272 588 268L625 168C650 100 690 50 720 25Z" fill="url(#shank)" />
    </g>
    <path d="M383 404C392 425 395 445 394 460L388 490C405 505 460 522 498 526 508 500 525 480 555 462L500 430 430 400Z" fill="url(#shank)" />
    <path d="M383 404C392 425 395 445 394 460L388 490C405 505 460 522 498 526 508 500 525 480 555 462L500 430 430 400Z" fill="url(#shadow)" />
    <path d="M388 489C396 500 433 515 467 523 482 527 495 527 498 526" fill="none" stroke="#33281a" strokeWidth=".8" />

    {/* cutting head */}
    <g transform="translate(300 250) scale(.3333)" stroke="#33281a" strokeWidth="2.200" strokeLinejoin="round">
      <path d="M123 400L183 442 265 465 355 512Q390 530 402 550 430 565 450 568L570 608 577 598 695 625 755 645 858 676Q880 670 884 655L977 402C985 350 980 300 940 255 910 225 860 210 822 205 820 180 805 160 750 133L700 133 685 178C660 165 635 178 622 205L592 222 546 190 552 130C555 105 548 88 530 78 500 60 470 44 430 42 400 42 375 60 355 90 310 100 275 130 255 165Z" fill="#f59600" />

      {/* rear tooth row */}
      <path d="M355 90C375 55 400 42 430 42 480 45 510 65 525 110L510 118C460 90 400 82 355 90Z" fill="#d88200" />
      <path d="M468 50C500 62 520 80 530 125L546 190 552 130C555 105 548 88 530 78Z" fill="#f8a000" />
      <path d="M386 84C388 66 410 68 414 84ZM432 88C434 62 462 62 464 90ZM478 104C480 88 500 88 505 110Z" fill="#7c4c00" />

      {/* left blade */}
      <path d="M123 400L255 165 278 185 183 442Z" fill="#cc7c00" />
      <path d="M183 442L278 185C300 130 350 92 430 96L530 122 534 130 430 102C360 100 310 150 285 210L198 450Z" fill="#d08000" stroke="none" />
      <path d="M255 165C285 115 340 84 405 84 455 88 500 100 530 125L430 98C360 92 300 125 278 185Z" fill="url(#rim)" />
      <path d="M183 442L278 185" />
      <path d="M534 130L505 228 592 222 546 190Z" fill="#e89000" stroke="none" />
      <path d="M546 190L592 222 600 260 540 235 505 228 520 205Z" fill="#f8aa00" />
      <path d="M515 215C535 200 555 215 560 225 540 228 525 225 515 215Z" fill="#e09000" />
      <path d="M198 450L285 210C310 150 360 100 430 102L534 130 505 228C460 225 425 225 400 235 370 250 355 265 345 290L262 466Z" fill="#00ffff" stroke="none" />

      {/* junk slot between blades */}
      <path d="M345 288C370 250 400 228 437 228L515 234 600 240 560 290C548 340 520 350 490 355Z" fill="url(#yellow)" />
      <path d="M437 230L545 280" fill="none" />
      <path d="M345 288L490 355C450 420 400 470 355 512L265 465Z" fill="#f99d0e" />
      <path d="M490 355C540 320 548 290 560 262L610 240 515 378 395 540 355 512C400 470 450 420 490 355Z" fill="#f39a0a" />
      <path d="M490 355L512 378" fill="none" />
      <path d="M540 255L565 270 545 280Z" fill="#c88200" />

      {/* front blade */}
      <path d="M622 205C600 240 566 255 562 290 550 330 530 355 512 378L390 535 402 550 480 440 585 305C595 270 610 230 622 205Z" fill="#cf8000" />
      <path d="M585 305L480 440 402 550C415 560 430 565 450 568L500 510 625 340Z" fill="url(#rim)" />
      <path d="M585 305C600 270 620 240 622 208 635 180 650 172 668 174 685 176 698 190 702 202 712 250 695 290 685 328L672 352 625 340Z" fill="url(#knob)" />
      <path d="M622 208C640 192 670 190 700 205M660 195C680 230 650 290 625 340" fill="none" />
      <path d="M625 340L672 352 650 415 570 608 450 568 500 510Z" fill="#ea8c00" />

      {/* rear fin */}
      <path d="M685 178L700 133 712 140C745 150 770 165 768 190L765 245 710 240 702 202Z" fill="#e88a00" />
      <path d="M700 133L750 133C790 150 815 165 822 205 800 205 785 215 775 232L765 245 768 190C770 165 745 150 712 140Z" fill="#f09400" />
      <path d="M768 190L812 187M750 133L768 165M712 140L708 240" fill="none" />
      <path d="M700 240L765 245 775 232 750 290 790 345 685 328C695 290 705 270 700 240Z" fill="#f8a808" />
      <path d="M712 255C740 255 755 270 760 290 735 280 715 275 712 255ZM715 312L750 292 795 295 775 325Z" fill="#ffba10" />

      {/* insert face */}
      <path d="M685 328C730 335 765 335 780 345 805 360 810 400 798 443L650 412Z" fill="url(#silver)" />
      <path d="M650 412L798 443C770 510 730 570 692 627L577 598Z" fill="url(#steel)" />

      {/* right blade */}
      <path d="M775 232C790 210 805 205 830 210 920 230 960 270 980 330L977 402 922 380C935 330 920 290 875 265L815 245 795 290 750 290Z" fill="url(#rimRight)" />
      <path d="M815 245L875 265C920 290 935 330 922 380L815 660 760 645 835 460C845 410 820 355 775 325L795 290Z" fill="#ffb80a" />
      <path d="M775 325C825 350 852 400 832 462L798 443C812 390 805 350 765 335Z" fill="url(#knob)" />
      <path d="M798 443L834 461 760 645 692 627C730 570 770 510 798 443Z" fill="#fba006" />
      <path d="M922 380L967 402 865 672 815 660Z" fill="url(#rimRight)" />
      <path d="M967 402L980 350 977 405 884 658 858 676Z" fill="#c47600" />
      <path d="M815 245L830 210M875 265L890 230M775 236L815 245" fill="none" />

      {/* tool path dots */}
      <path d="M508 62L512 120 514 165 518 212" fill="none" stroke="#0a14e0" strokeWidth="8" strokeDasharray="9 12" />
      <path d="M128 446L185 460" fill="none" stroke="#0a14e0" strokeWidth="8" strokeDasharray="8 10" />
      <path d="M184 463L202 453" stroke="#f8b400" strokeWidth="7" />
      <circle cx="512" cy="218" r="8" fill="#ffc8cc" stroke="none" />
    </g>

    {/* coordinate systems */}
    <g transform="translate(290 470) scale(.3333)" fontFamily="Liberation Sans" fontSize="39">
      <path d="M255 315L392 355 370 440 332 472M255 315L218 430 235 415 345 452" fill="none" stroke="#e8dcd0" strokeWidth="3.500" />
      <path d="M332 472L145 403 90 384" stroke="#d4ecc8" strokeWidth="6" fill="none" />
      <path d="M205 420L250 438 245 448 205 430Z" fill="#8cd07c" />
      <path d="M40 366L100 378 88 392Z" fill="#2c9038" />
      <path d="M98 386L146 400 138 412Z" fill="#ddd" />
      <path d="M332 470L405 252" stroke="#7c88c8" strokeWidth="9" />
      <path d="M345 440L385 330" stroke="#3c50c8" strokeWidth="4" />
      <path d="M390 288L405 246 412 288Z" fill="#ccc" />
      <path d="M407 248L433 183 430 243Z" fill="#6078e0" />
      <path d="M332 472L372 440 370 462Z" fill="#d8c8c8" />
      <text x="371" y="173" fill="#3a32e8">ZM</text>
      <text x="330" y="309" fill="#3a32e8">ZC</text>
      <text x="408" y="240" fill="#d0dcf8" fontSize="34">Z</text>
      <text x="42" y="350" fill="#3c9448">YM</text>
      <text x="176" y="401" fill="#4c9c38">YC</text>
      <text x="308" y="446" fill="#d83020" fontSize="30">X</text>
      <text x="332" y="428" fill="#d83020" fontSize="34">XM</text>
      <text x="362" y="466" fill="#ddd" fontSize="30">X</text>
    </g>

    {/* view triad */}
    <g fontFamily="Liberation Sans" fontSize="12">
      <path d="M281 724l15 4-5 17-15-5Z" fill="#d0d0d2" stroke="#999" />
      <path d="M283 727l10 3-4 12" fill="none" stroke="#aaa" />
      <path d="M289 744l-18-6" stroke="#2c8038" strokeWidth="1.500" />
      <path d="M264 737l10 0-2 4Z" fill="#2c8038" />
      <circle cx="290" cy="747" r="4" fill="#999" />
      <path d="M292 743l5-18" stroke="#1034d8" strokeWidth="2" />
      <path d="M299 720l-4 8h4Z" fill="#1034d8" />
      <text x="297" y="721" fill="#1840e8">Z</text>
      <text x="256" y="740" fill="#2c9038">Y</text>
      <text x="292" y="748" fill="#d02828" fontSize="11">X</text>
    </g>
  </svg>
);

const Viewport = () => (
  <main className="relative mr-[3px] min-w-0 flex-1 border border-[#f0a050] bg-linear-to-b from-[#b3b4b6] to-[#e6e8ea] to-75%">
    <div className="absolute inset-0">
      <Model />
    </div>
    <p className="absolute bottom-px left-[6px] text-[13px] leading-5 whitespace-nowrap text-[#f5994b]">
      正三轴测图 工作 摄像机 正三轴测图
    </p>
  </main>
);

/* Strip of the desktop visible behind the window */
const Desktop = () => (
  <div className="flex w-[3px] shrink-0 flex-col">
    <div className="h-4 bg-[#1060b4]" />
    <div className="h-16 bg-linear-to-b from-[#4c90d4] to-[#c4dcf0]" />
    <div className="h-[58px] bg-[#dce8f8]" />
    <div className="h-[5px] bg-[#700838]" />
    <div className="h-[6px] bg-[#183c68]" />
    <div className="h-[5px] bg-[#08783c]" />
    <div className="flex-1 bg-[#fbfbfb]" />
    <div className="h-[22px] border-y border-[#ccc] bg-[#eee]" />
    <div className="h-40 bg-[#fbfbfb]" />
    <div className="h-12 bg-[#c0d0ec]" />
    <div className="h-[7px] bg-[#1c5c94]" />
    <div className="h-14 bg-[#1ca4f4]" />
  </div>
);

const App = () => {
  const [tab, setTab] = useState('主页');

  return (
    <div
      className="flex min-h-screen bg-white"
      style={{ fontFamily: '"Noto Sans", "Noto Sans CJK SC", sans-serif' }}
    >
      <div className="flex min-w-0 flex-1 flex-col border-r border-[#aaa] pl-px">
        <TitleBar />
        <TabBar tab={tab} onTab={setTab} />
        <Ribbon />
        <Toolbar />
        <div className="flex flex-1">
          <Rail />
          <Navigator />
          <div className="w-px bg-[#8c8f92]" />
          <Viewport />
        </div>
        <footer className="flex h-[23px] items-center justify-between border-y border-[#aaa] text-[11px] font-bold text-[#111]">
          <span className="pl-[307px]">全部 1</span>
          <button className="mr-[57px]" aria-label="全屏显示"><FrameIcon /></button>
        </footer>
        <div className="h-[4px] bg-[#c8d7d5]" />
      </div>
      <Desktop />
    </div>
  );
};

export default App;
